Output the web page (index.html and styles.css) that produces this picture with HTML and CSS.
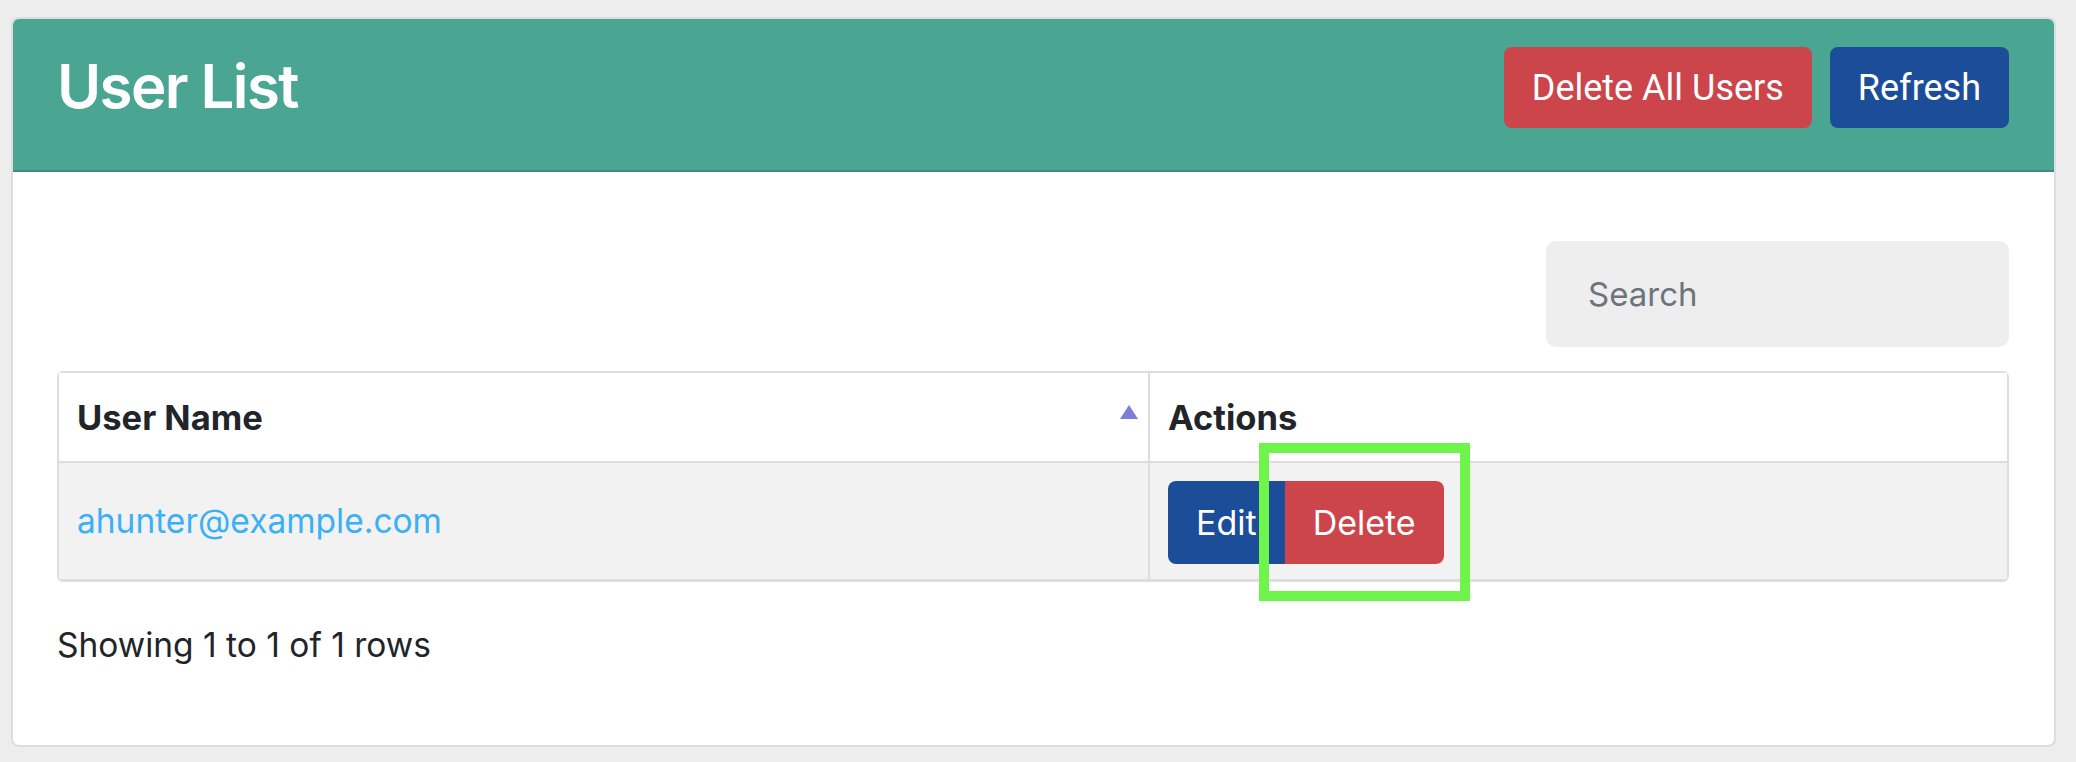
FILE: index.html
```html
<!DOCTYPE html>
<html lang="en">
<head>
<meta charset="utf-8">
<title>User List</title>
<link rel="stylesheet" href="styles.css">
</head>
<body>
<div class="card">
  <div class="card-header">
    <h1 class="title">User List</h1>
    <div class="header-actions">
      <button class="btn btn-danger btn-head">Delete All Users</button>
      <button class="btn btn-primary btn-head">Refresh</button>
    </div>
  </div>
  <div class="card-body">
    <div class="toolbar">
      <input class="search" type="text" placeholder="Search">
    </div>
    <table class="table">
      <thead>
        <tr>
          <th class="col-name">
            <div class="th-inner">
              <span>User Name</span>
              <svg class="sort-icon" width="18" height="14" viewBox="0 0 18 14"><polygon points="9,0 18,14 0,14" fill="#7b7fd9"/></svg>
            </div>
          </th>
          <th class="col-actions">Actions</th>
        </tr>
      </thead>
      <tbody>
        <tr>
          <td class="col-name"><a class="user-link" href="#">ahunter@example.com</a></td>
          <td class="col-actions">
            <div class="btn-group">
              <button class="btn btn-primary btn-row btn-left">Edit</button>
              <button class="btn btn-danger btn-row btn-right">Delete</button>
            </div>
            <div class="highlight"></div>
          </td>
        </tr>
      </tbody>
    </table>
    <div class="pagination-detail">Showing 1 to 1 of 1 rows</div>
  </div>
</div>
</body>
</html>
```

FILE: styles.css
```css
html, body {
  margin: 0;
  padding: 0;
}
body {
  background: #ededed;
  padding: 17px 20px 17px 11px;
  font-family: "Inter", "Helvetica Neue", Arial, sans-serif;
  color: #212529;
}
.card {
  background: #ffffff;
  border: 2px solid #dddddd;
  border-radius: 8px;
  overflow: hidden;
}
.card-header {
  background: #4aa592;
  border-bottom: 2px solid #3f8c7c;
  height: 126px;
  padding: 25px 45px 0 44px;
  display: flex;
  justify-content: space-between;
  align-items: flex-start;
}
.title {
  margin: 0;
  padding-top: 4px;
  font-family: "Inter", Arial, sans-serif;
  font-weight: 600;
  font-size: 60px;
  letter-spacing: -1.6px;
  line-height: 77px;
  color: #ffffff;
}
.header-actions {
  display: flex;
  gap: 18px;
  padding-top: 3px;
}
.btn {
  border: none;
  color: #ffffff;
  cursor: pointer;
}
.btn-head {
  font-family: "Roboto", Arial, sans-serif;
  font-size: 36px;
  height: 81px;
  padding: 0 28px;
  border-radius: 8px;
}
.btn-danger { background: #cc454b; }
.btn-primary { background: #1c4d98; }
.card-body {
  padding: 69px 45px 76px 44px;
}
.toolbar {
  display: flex;
  justify-content: flex-end;
  margin-bottom: 24px;
}
.search {
  width: 463px;
  height: 106px;
  box-sizing: border-box;
  border: none;
  border-radius: 10px;
  background: #eeeeee;
  padding: 0 42px;
  font-family: "Inter", Arial, sans-serif;
  font-size: 33px;
  color: #495057;
  outline: none;
}
.search::placeholder {
  color: #6c757d;
}
.table {
  width: 100%;
  border-collapse: separate;
  border-spacing: 0;
  border: 2px solid #dddddd;
  border-bottom-width: 3px;
  border-radius: 6px;
  font-size: 33.5px;
}
.table th {
  height: 88px;
  text-align: left;
  font-weight: 700;
  font-size: 34.5px;
  border-bottom: 2px solid #dddddd;
  padding: 0 18px;
  background: #ffffff;
}
.table td {
  height: 116px;
  background: #f2f2f2;
  padding: 0 18px;
}
.table th.col-name, .table td.col-name {
  width: 1053px;
  border-right: 2px solid #dddddd;
}
.th-inner {
  display: flex;
  justify-content: space-between;
  align-items: center;
}
.sort-icon {
  margin-top: -10px;
  margin-right: -8px;
}
.user-link {
  color: #3cb0f5;
  text-decoration: none;
}
.col-actions {
  position: relative;
}
.btn-group {
  display: flex;
  padding-top: 3px;
}
.btn-row {
  font-family: "Inter", Arial, sans-serif;
  font-size: 34px;
  height: 83px;
  padding: 0 28px;
}
.btn-left { border-radius: 8px 0 0 8px; }
.btn-right { border-radius: 0 8px 8px 0; }
.highlight {
  position: absolute;
  left: 109px;
  top: -20px;
  width: 191px;
  height: 138px;
  border: 10px solid #6ef44a;
  pointer-events: none;
}
.pagination-detail {
  margin-top: 39px;
  font-size: 33.5px;
  line-height: 48px;
}
```
